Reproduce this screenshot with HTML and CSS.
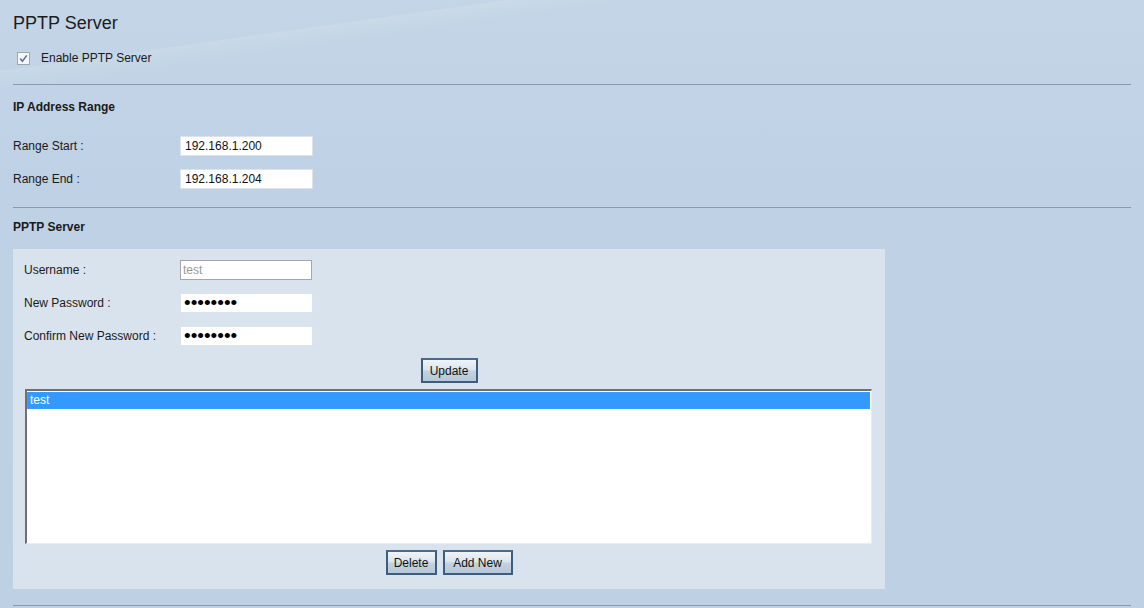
FILE: index.html
```html
<!DOCTYPE html>
<html lang="en">

<head>
    <meta charset="UTF-8">
    <title>PPTP Server</title>
    <link rel="stylesheet" href="styles.css">
</head>

<body>
    <h1 class="page-title">PPTP Server</h1>

    <div class="check-row">
        <span class="checkbox">
            <svg width="13" height="13" viewBox="0 0 13 13">
                <rect x="0.5" y="0.5" width="12" height="12" fill="#f4f6f8" stroke="#9ea6ae" />
                <path d="M3.2 6.6 L5.4 9.2 L9.8 3.4" fill="none" stroke="#5a6f9a" stroke-width="1.5" />
            </svg>
        </span>
        <span>Enable PPTP Server</span>
    </div>

    <hr class="divider first">

    <h2 class="section-title">IP Address Range</h2>

    <div class="form-row range-start">
        <label>Range Start :</label>
        <input type="text" class="field" value="192.168.1.200">
    </div>
    <div class="form-row">
        <label>Range End :</label>
        <input type="text" class="field" value="192.168.1.204">
    </div>

    <hr class="divider second">

    <h2 class="section-title server-title">PPTP Server</h2>

    <div class="panel">
        <div class="form-row">
            <label>Username :</label>
            <input type="text" class="field disabled" value="test" disabled>
        </div>
        <div class="form-row">
            <label>New Password :</label>
            <input type="password" class="field secret" value="password">
        </div>
        <div class="form-row">
            <label>Confirm New Password :</label>
            <input type="password" class="field secret" value="password">
        </div>

        <div class="button-row update-row">
            <button class="btn btn-update">Update</button>
        </div>

        <div class="listbox">
            <div class="list-item selected">test</div>
        </div>

        <div class="button-row">
            <button class="btn btn-delete">Delete</button>
            <button class="btn btn-add">Add New</button>
        </div>
    </div>

    <hr class="divider last">
</body>

</html>
```

FILE: styles.css
```css
* {
    margin: 0;
    padding: 0;
    box-sizing: border-box;
}

body {
    font-family: "Liberation Sans", Arial, sans-serif;
    font-size: 12px;
    color: #1a1a1a;
    padding: 0 13px;
    height: 100vh;
    overflow: hidden;
    background:
        linear-gradient(172deg, rgba(255, 255, 255, 0) 0px, rgba(255, 255, 255, 0) 70px, rgba(255, 255, 255, 0.12) 71px, rgba(255, 255, 255, 0) 90px),
        linear-gradient(to bottom, #c3d5e6 0%, #bfd1e5 30%, #bed0e4 100%);
}

.page-title {
    font-size: 18px;
    font-weight: normal;
    line-height: 22px;
    margin-top: 12px;
    color: #1c1c1c;
}

.check-row {
    display: flex;
    align-items: center;
    height: 20px;
    margin-top: 14px;
    padding-left: 4px;
    gap: 11px;
}

.checkbox {
    display: flex;
    width: 13px;
    height: 13px;
}

.divider {
    border: none;
    height: 1px;
    background-color: #8a9aaa;
}

.divider.first {
    margin-top: 16px;
}

.divider.second {
    margin-top: 18px;
}

.divider.last {
    margin-top: 16px;
}

.section-title {
    font-size: 12px;
    font-weight: bold;
    line-height: 16px;
    margin-top: 14px;
}

.section-title.server-title {
    margin-top: 11px;
}

.form-row {
    display: flex;
    align-items: center;
    height: 20px;
    margin-top: 13px;
}

.form-row.range-start {
    margin-top: 21px;
}

.form-row label {
    width: 167px;
}

.field {
    width: 133px;
    height: 20px;
    border: 1px solid #dde3ea;
    background: #fff;
    font-family: "Liberation Sans", Arial, sans-serif;
    font-size: 12px;
    padding: 0 4px;
    color: #111;
    outline: none;
}

.field.secret {
    font-size: 19px;
    padding: 0 3px;
    color: #000;
}

.field.disabled {
    border-color: #a6a6a6;
    color: #9a9a9a;
    width: 132px;
    padding: 0 2px;
}

.panel {
    margin-top: 14px;
    width: 872px;
    background-color: #d9e3ed;
    padding: 11px 0 14px 0;
}

.panel .form-row {
    padding-left: 11px;
}

.panel .form-row:first-child {
    margin-top: 0;
}

.panel .form-row label {
    width: 156px;
}

.button-row {
    display: flex;
    justify-content: center;
    gap: 6px;
    margin-top: 6px;
}

.button-row.update-row {
    margin-top: 12px;
}

.btn {
    height: 25px;
    padding: 0;
    font-family: "Liberation Sans", Arial, sans-serif;
    font-size: 12px;
    color: #111;
    border: 2px solid #3c5d7e;
    border-top-color: #4a6b8c;
    background: linear-gradient(to bottom, #eef3f7 0%, #dbe5ee 45%, #c2d2e0 55%, #b7c8d8 100%);
    cursor: pointer;
}

.btn-update {
    width: 57px;
}

.btn-delete {
    width: 51px;
}

.btn-add {
    width: 70px;
}

.listbox {
    margin: 6px 0 0 12px;
    width: 847px;
    height: 155px;
    background: #fff;
    border: 1px solid #ececec;
    border-top: 2px solid #707070;
    border-left: 2px solid #707070;
    padding: 1px 1px 0 0;
}

.list-item {
    height: 17px;
    line-height: 15px;
    padding-left: 2px;
    font-size: 12px;
}

.list-item.selected {
    background-color: #3399ff;
    color: #fff;
    border: 1px dotted #e07a1a;
}
```
